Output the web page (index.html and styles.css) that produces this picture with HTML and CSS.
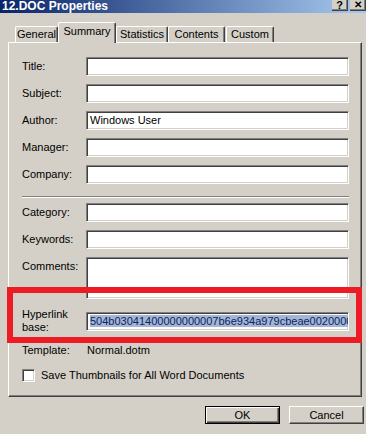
FILE: index.html
```html
<!DOCTYPE html>
<html>
<head>
    <meta charset="utf-8">
    <title>12.DOC Properties</title>
    <link rel="stylesheet" href="styles.css">
</head>
<body>
    <div class="dialog">
        <div class="titlebar">
            <span class="caption">12.DOC Properties</span>
            <div class="caption-btns">
                <span class="cap-btn">?</span>
                <span class="cap-btn cap-close">&#x2715;</span>
            </div>
        </div>

        <div class="tabs">
            <span class="tab tab-general">General</span>
            <span class="tab tab-active">Summary</span>
            <span class="tab tab-stats">Statistics</span>
            <span class="tab tab-contents">Contents</span>
            <span class="tab tab-custom">Custom</span>
        </div>

        <div class="panel">
            <div class="form-grid">
                <label>Title:</label>
                <div class="field"></div>
                <label>Subject:</label>
                <div class="field"></div>
                <label>Author:</label>
                <div class="field">Windows User</div>
                <label>Manager:</label>
                <div class="field"></div>
                <label>Company:</label>
                <div class="field"></div>
            </div>

            <div class="separator"></div>

            <div class="form-grid form-grid-second">
                <label>Category:</label>
                <div class="field"></div>
                <label>Keywords:</label>
                <div class="field"></div>
                <label>Comments:</label>
                <div class="field field-tall"></div>
            </div>

            <div class="form-grid hyperlink-row">
                <label class="label-two-lines">Hyperlink<br>base:</label>
                <div class="field"><span class="selected">504b03041400000000007b6e934a979cbeae002000000000000</span></div>
            </div>

            <div class="form-grid template-row">
                <label>Template:</label>
                <span class="static-value">Normal.dotm</span>
            </div>

            <div class="checkbox-row">
                <span class="checkbox"></span>
                <span>Save Thumbnails for All Word Documents</span>
            </div>
        </div>

        <div class="footer">
            <button class="btn btn-default">OK</button>
            <button class="btn">Cancel</button>
        </div>

        <div class="highlight-box"></div>
    </div>
</body>
</html>
```

FILE: styles.css
```css
body {
    margin: 0;
    background-color: #d4d0c8;
    font-family: "Liberation Sans", Arial, sans-serif;
    font-size: 11px;
    color: #000;
}

.dialog {
    position: relative;
    width: 366px;
    height: 434px;
    overflow: hidden;
}

/* title bar */
.titlebar {
    height: 13px;
    display: flex;
    justify-content: space-between;
    background: linear-gradient(to right, #0a246a, #a6caf0);
}

.caption {
    color: white;
    font-weight: bold;
    font-size: 12px;
    line-height: 13px;
    padding-left: 2px;
}

.caption-btns {
    display: flex;
    gap: 2px;
}

.cap-btn {
    width: 16px;
    height: 11px;
    box-sizing: border-box;
    background-color: #d4d0c8;
    border-right: 1px solid #404040;
    border-bottom: 1px solid #404040;
    box-shadow: inset -1px -1px #808080;
    font-weight: bold;
    font-size: 11px;
    line-height: 10px;
    text-align: center;
}

.cap-close {
    font-size: 10px;
}

/* tabs */
.tabs {
    height: 29px;
    display: flex;
    align-items: flex-end;
    padding-left: 15px;
}

.tab {
    height: 16px;
    box-sizing: border-box;
    border-top: 1px solid #fff;
    border-left: 1px solid #fff;
    border-right: 1px solid #404040;
    border-radius: 2px 2px 0 0;
    box-shadow: inset -1px 0 #808080;
    line-height: 14px;
    text-align: center;
}

.tab-general { width: 43px; }
.tab-stats { width: 52px; }
.tab-contents { width: 57px; }
.tab-custom { width: 48px; margin-left: 1px; }

.tab-active {
    width: 58px;
    height: 21px;
    margin-bottom: -1px;
    position: relative;
    z-index: 1;
    background-color: #d4d0c8;
    line-height: 17px;
}

/* panel */
.panel {
    width: 354px;
    height: 355px;
    margin-left: 8px;
    box-sizing: border-box;
    border-top: 1px solid #fff;
    border-left: 1px solid #fff;
    border-right: 1px solid #404040;
    border-bottom: 1px solid #404040;
    box-shadow: inset -1px -1px #808080;
    padding: 14px 0 0 13px;
}

.form-grid {
    display: grid;
    grid-template-columns: 64px 263px;
    row-gap: 8px;
}

.form-grid label {
    line-height: 19px;
}

.field {
    height: 19px;
    box-sizing: border-box;
    background-color: white;
    border-top: 1px solid #808080;
    border-left: 1px solid #808080;
    border-right: 1px solid #fff;
    border-bottom: 1px solid #fff;
    box-shadow: inset 1px 1px #404040, inset -1px -1px #d4d0c8;
    padding: 0 3px;
    line-height: 17px;
    white-space: nowrap;
    overflow: hidden;
}

.field-tall {
    height: 42px;
}

.separator {
    width: 327px;
    margin: 12px 0 5px;
    border-top: 1px solid #808080;
    border-bottom: 1px solid #fff;
}

.hyperlink-row {
    margin-top: 9px;
    align-items: center;
}

.form-grid .label-two-lines {
    line-height: 13px;
}

.selected {
    background-color: #a5b6d2;
    color: #0a246a;
}

.template-row {
    margin-top: 7px;
    line-height: 19px;
}

.static-value {
    padding-left: 1px;
}

.checkbox-row {
    display: flex;
    align-items: center;
    gap: 6px;
    margin-top: 9px;
    line-height: 13px;
}

.checkbox {
    width: 13px;
    height: 13px;
    box-sizing: border-box;
    background-color: white;
    border-top: 1px solid #808080;
    border-left: 1px solid #808080;
    border-right: 1px solid #fff;
    border-bottom: 1px solid #fff;
    box-shadow: inset 1px 1px #404040, inset -1px -1px #d4d0c8;
}

/* buttons */
.footer {
    display: flex;
    justify-content: flex-end;
    gap: 9px;
    margin-top: 9px;
    padding-right: 2px;
}

.btn {
    width: 75px;
    height: 18px;
    padding: 0;
    font-family: inherit;
    font-size: 11px;
    color: #000;
    background-color: #d4d0c8;
    border-top: 1px solid #fff;
    border-left: 1px solid #fff;
    border-right: 1px solid #404040;
    border-bottom: 1px solid #404040;
    box-shadow: inset -1px -1px #808080;
}

.btn-default {
    border: 1px solid #000;
    box-shadow: inset 1px 1px #fff, inset -1px -1px #404040, inset -2px -2px #808080;
}

/* annotation drawn over the screenshot */
.highlight-box {
    position: absolute;
    left: 7px;
    top: 287px;
    width: 355px;
    height: 56px;
    box-sizing: border-box;
    border: 6px solid #ed1c24;
}
```
